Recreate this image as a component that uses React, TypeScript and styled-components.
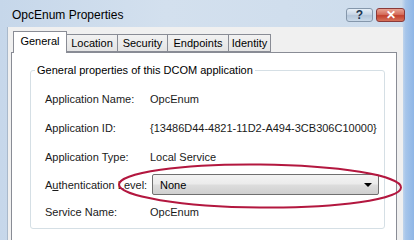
import React from "react";
import styled, { createGlobalStyle } from "styled-components";

const GlobalStyle = createGlobalStyle`
  html, body {
    margin: 0;
    padding: 0;
    background: #a9c7ea;
  }
  body {
    font-family: "Liberation Sans", Arial, sans-serif;
    font-size: 11px;
    color: #000;
  }
`;

const Window = styled.div`
  position: relative;
  width: 414px;
  height: 240px;
  overflow: hidden;
  display: flex;
  flex-direction: column;
  background: linear-gradient(to right, #c6d7ea 0, #d3e0ee 40%, #cddcec 97%, #a6c5ea 98%, #8fb6e6 100%);
`;

const TitleBar = styled.div`
  height: 27px;
  flex: none;
  display: flex;
  align-items: center;
  padding: 0 9px 0 12px;
  box-sizing: border-box;
`;

const Title = styled.div`
  flex: 1;
  font-size: 12px;
  line-height: 14px;
  margin-top: 3px;
`;

const CaptionButtons = styled.div`
  display: flex;
  gap: 3px;
  align-self: flex-start;
  margin-top: 8px;
`;

const CaptionButton = styled.div<{ $close?: boolean }>`
  width: ${p => (p.$close ? 29 : 27)}px;
  height: 14px;
  box-sizing: border-box;
  border: 1px solid ${p => (p.$close ? "#8a3a3a" : "#8597ab")};
  border-radius: 3px;
  display: flex;
  align-items: center;
  justify-content: center;
  background: ${p =>
    p.$close
      ? "linear-gradient(#e8a393 0, #d56e5d 45%, #c2402e 55%, #d6715a 100%)"
      : "linear-gradient(#e6eef7 0, #c8d6e6 45%, #b4c6da 55%, #cad9e9 100%)"};
  color: ${p => (p.$close ? "#fff" : "#1c3550")};
  font-size: 12px;
  font-weight: bold;
  line-height: 12px;
`;

const Client = styled.div`
  flex: 1;
  margin: 0 11px 0 7px;
  background: #f0f0f0;
  border-left: 1px solid #a9b9cb;
  padding: 4px 6px 0 3px;
  display: flex;
  flex-direction: column;
  min-height: 0;
`;

const TabRow = styled.div`
  display: flex;
  align-items: flex-end;
  padding-left: 2px;
  height: 21px;
  position: relative;
  z-index: 1;
`;

const Tab = styled.div<{ $active?: boolean; $w: number }>`
  width: ${p => p.$w}px;
  height: ${p => (p.$active ? 22 : 18)}px;
  margin-bottom: ${p => (p.$active ? -1 : 0)}px;
  box-sizing: border-box;
  border: 1px solid #898c95;
  border-bottom: ${p => (p.$active ? "none" : "1px solid #898c95")};
  margin-left: ${p => (p.$active ? 0 : -1)}px;
  background: ${p => (p.$active ? "#fff" : "linear-gradient(#f2f2f2, #e4e4e4)")};
  display: flex;
  align-items: center;
  justify-content: center;
  padding-bottom: ${p => (p.$active ? 3 : 0)}px;
  &:first-child {
    margin-left: 0;
  }
`;

const Pane = styled.div`
  flex: 1;
  background: #fff;
  border: 1px solid #898c95;
  border-bottom: none;
  min-height: 0;
`;

const Group = styled.fieldset`
  margin: 11px 11px 0 18px;
  padding: 7px 0 0 14px;
  height: 165px;
  box-sizing: border-box;
  border: 1px solid #d5dfe5;
  border-radius: 3px;
`;

const Legend = styled.legend`
  padding: 0 2px;
  margin-left: -10px;
  line-height: 13px;
`;

const Row = styled.div<{ $h: number }>`
  height: ${p => p.$h}px;
  display: flex;
  align-items: center;
`;

const Label = styled.div`
  width: 105px;
  flex: none;
  color: #1a1a1a;
`;

const Value = styled.div`
  color: #1a1a1a;
`;

const Combo = styled.div`
  width: 227px;
  height: 21px;
  margin-left: 2px;
  box-sizing: border-box;
  border: 1px solid #707070;
  border-radius: 2px;
  background: linear-gradient(#f3f3f3 0, #ebebeb 48%, #dddddd 52%, #cfcfcf 100%);
  display: flex;
  align-items: center;
  padding: 0 6px 0 7px;
`;

const ComboText = styled.div`
  flex: 1;
`;

const Arrow = styled.div`
  width: 0;
  height: 0;
  border-left: 4px solid transparent;
  border-right: 4px solid transparent;
  border-top: 4px solid #000;
`;

const Annotation = styled.svg`
  position: absolute;
  left: 115px;
  top: 161px;
  pointer-events: none;
`;

const rows: { label: React.ReactNode; value: string; h: number }[] = [
  { label: "Application Name:", value: "OpcEnum", h: 29 },
  { label: "Application ID:", value: "{13486D44-4821-11D2-A494-3CB306C10000}", h: 29 },
  { label: "Application Type:", value: "Local Service", h: 29 },
];

const tabs = [
  { name: "General", w: 54 },
  { name: "Location", w: 52 },
  { name: "Security", w: 51 },
  { name: "Endpoints", w: 62 },
  { name: "Identity", w: 43 },
];

export default function App() {
  return (
    <>
      <GlobalStyle />
      <Window>
        <TitleBar>
          <Title>OpcEnum Properties</Title>
          <CaptionButtons>
            <CaptionButton>?</CaptionButton>
            <CaptionButton $close>✕</CaptionButton>
          </CaptionButtons>
        </TitleBar>
        <Client>
          <TabRow>
            {tabs.map((t, i) => (
              <Tab key={t.name} $w={t.w} $active={i === 0}>
                {t.name}
              </Tab>
            ))}
          </TabRow>
          <Pane>
            <Group>
              <Legend>General properties of this DCOM application</Legend>
              {rows.map(r => (
                <Row key={r.value} $h={r.h}>
                  <Label>{r.label}</Label>
                  <Value>{r.value}</Value>
                </Row>
              ))}
              <Row $h={27}>
                <Label>
                  A<u>u</u>thentication Level:
                </Label>
                <Combo>
                  <ComboText>None</ComboText>
                  <Arrow />
                </Combo>
              </Row>
              <Row $h={27}>
                <Label>Service Name:</Label>
                <Value>OpcEnum</Value>
              </Row>
            </Group>
          </Pane>
        </Client>
        <Annotation width="290" height="52" viewBox="0 0 290 52">
          <ellipse
            cx="145"
            cy="25"
            rx="141"
            ry="21.5"
            fill="none"
            stroke="#b3173f"
            strokeWidth="2"
            transform="rotate(0.6 145 25)"
          />
        </Annotation>
      </Window>
    </>
  );
}
